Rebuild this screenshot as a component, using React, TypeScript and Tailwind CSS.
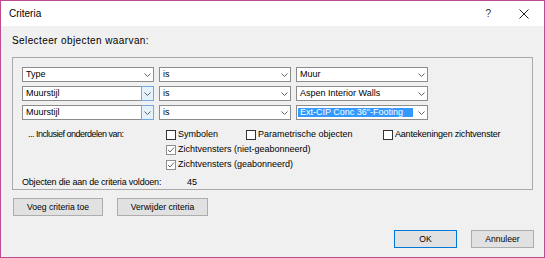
import React from "react";

const font = { fontFamily: '"Liberation Sans", Arial, sans-serif' };

const Chevron = () => (
  <svg width="7" height="4" viewBox="0 0 7 4">
    <path d="M0.5 0.5 L3.5 3.5 L6.5 0.5" fill="none" stroke="#606060" strokeWidth="1" />
  </svg>
);

function Combo({ text, hot, selected }: { text: string; hot?: boolean; selected?: boolean }) {
  return (
    <div className="flex h-[15px] w-[132px]">
      {selected ? (
        <div className="flex-1 flex bg-white border border-r-0 border-[#8c8c8c] p-[2px] pl-[1px]">
          <div className="flex-1 flex items-center bg-[#3399ff] text-white pl-[2px] text-[9px] leading-none">{text}</div>
        </div>
      ) : (
        <div className="flex-1 flex items-center bg-white border border-r-0 border-[#8c8c8c] pl-[3px] text-[9px] leading-none">
          {text}
        </div>
      )}
      {hot ? (
        <div className="w-[13px] flex items-center justify-center bg-[#e5f1fb] border border-[#6fa8e3]">
          <Chevron />
        </div>
      ) : (
        <div className="w-[13px] flex items-center justify-center bg-white border border-l-0 border-[#8c8c8c]">
          <Chevron />
        </div>
      )}
    </div>
  );
}

function Check({ label, checked, tight }: { label: string; checked?: boolean; tight?: boolean }) {
  return (
    <div className="flex items-center gap-[2px] h-[15px]">
      {checked ? (
        <div className="w-[10px] h-[10px] border border-[#8f8f8f] bg-white flex items-center justify-center">
          <svg width="8" height="8" viewBox="0 0 8 8">
            <path d="M1 4 L3 6 L7 1.5" fill="none" stroke="#555" strokeWidth="0.9" />
          </svg>
        </div>
      ) : (
        <div className="w-[10px] h-[10px] border border-[#333333] bg-white" />
      )}
      <span className={tight ? "text-[9px] tracking-[-0.2px] leading-none" : "text-[9px] leading-none"}>{label}</span>
    </div>
  );
}

export default function App() {
  return (
    <div style={font} className="w-[545px] h-[258px] border border-[#c04a90] bg-[#f0f0f0] flex flex-col text-black overflow-hidden">
      <div className="h-[25px] bg-white flex items-center pl-[8px] shrink-0">
        <span className="text-[10px]">Criteria</span>
        <span className="ml-auto mr-[28px] text-[10px] text-[#333]">?</span>
        <svg width="10" height="10" viewBox="0 0 10 10" className="mr-[15px]">
          <path d="M0.5 0.5 L9.5 9.5 M9.5 0.5 L0.5 9.5" stroke="#222" strokeWidth="1" />
        </svg>
      </div>
      <div className="flex flex-col px-[11px]">
        <div className="pt-[8px] text-[10px] tracking-[0.4px] leading-[13px]">Selecteer objecten waarvan:</div>
        <div className="mt-[10px] h-[133px] border border-[#a9a9a9] flex flex-col pl-[9px] pt-[9px]">
          <div className="flex flex-col gap-[4px]">
            <div className="flex gap-[5px]">
              <Combo text="Type" />
              <Combo text="is" />
              <Combo text="Muur" />
            </div>
            <div className="flex gap-[5px]">
              <Combo text="Muurstijl" hot />
              <Combo text="is" />
              <Combo text="Aspen Interior Walls" />
            </div>
            <div className="flex gap-[5px]">
              <Combo text="Muurstijl" hot />
              <Combo text="is" />
              <Combo text={"Ext-CIP Conc 36\"-Footing"} selected />
            </div>
          </div>
          <div className="mt-[7px] flex">
            <div className="w-[144px] pl-[6px] h-[15px] flex items-center text-[9px] tracking-[-0.5px] leading-none">
              ... Inclusief onderdelen van:
            </div>
            <div className="flex flex-col">
              <div className="flex">
                <div className="w-[80px]">
                  <Check label="Symbolen" />
                </div>
                <div className="w-[137px]">
                  <Check label="Parametrische objecten" />
                </div>
                <Check label="Aantekeningen zichtvenster" tight />
              </div>
              <Check label="Zichtvensters (niet-geabonneerd)" checked />
              <Check label="Zichtvensters (geabonneerd)" checked />
            </div>
          </div>
          <div className="mt-[4px] h-[14px] flex items-center text-[9px] leading-none">
            <span className="w-[165px] tracking-[-0.2px]">Objecten die aan de criteria voldoen:</span>
            <span>45</span>
          </div>
        </div>
        <div className="mt-[8px] flex gap-[14px] pl-[1px]">
          <button className="w-[90px] h-[18px] bg-[#e1e1e1] border border-[#adadad] text-[8.6px] leading-none">
            Voeg criteria toe
          </button>
          <button className="w-[91px] h-[18px] bg-[#e1e1e1] border border-[#adadad] text-[8.6px] leading-none">
            Verwijder criteria
          </button>
        </div>
        <div className="mt-[14px] flex justify-end gap-[14px] mr-[-1px]">
          <button className="w-[63px] h-[18px] bg-[#e1e1e1] border border-[#0078d7] text-[8.6px] leading-none">
            OK
          </button>
          <button className="w-[63px] h-[18px] bg-[#e1e1e1] border border-[#adadad] text-[8.6px] leading-none">
            Annuleer
          </button>
        </div>
      </div>
    </div>
  );
}
